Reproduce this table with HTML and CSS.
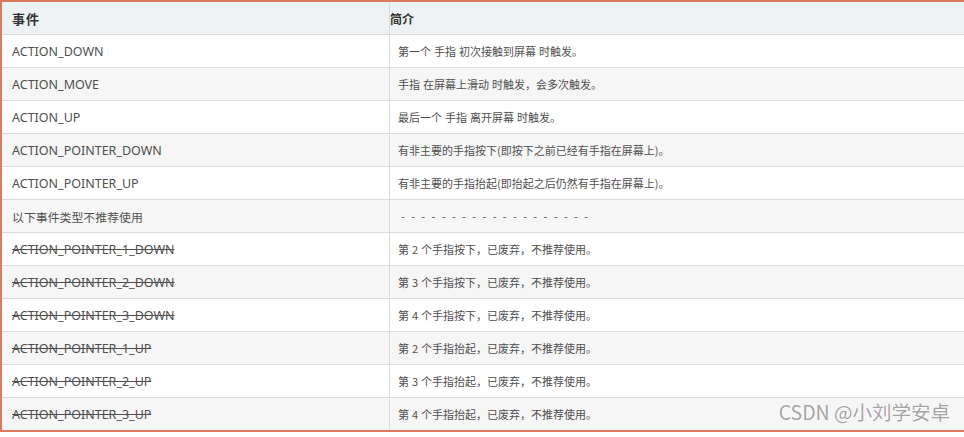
FILE: index.html
```html
<!DOCTYPE html>
<html>
<head>
<meta charset="utf-8">
<link rel="stylesheet" href="styles.css">
</head>
<body>
<div class="frame">
  <div class="table">
    <div class="row head">
      <div class="cell c1">事件</div>
      <div class="cell c2">简介</div>
    </div>
    <div class="row">
      <div class="cell c1">ACTION_DOWN</div>
      <div class="cell c2">第一个 手指 初次接触到屏幕 时触发。</div>
    </div>
    <div class="row alt">
      <div class="cell c1">ACTION_MOVE</div>
      <div class="cell c2">手指 在屏幕上滑动 时触发，会多次触发。</div>
    </div>
    <div class="row">
      <div class="cell c1">ACTION_UP</div>
      <div class="cell c2">最后一个 手指 离开屏幕 时触发。</div>
    </div>
    <div class="row alt">
      <div class="cell c1">ACTION_POINTER_DOWN</div>
      <div class="cell c2">有非主要的手指按下(即按下之前已经有手指在屏幕上)。</div>
    </div>
    <div class="row">
      <div class="cell c1">ACTION_POINTER_UP</div>
      <div class="cell c2">有非主要的手指抬起(即抬起之后仍然有手指在屏幕上)。</div>
    </div>
    <div class="row alt">
      <div class="cell c1 cjk">以下事件类型不推荐使用</div>
      <div class="cell c2 dashes">- - - - - - - - - - - - - - - - - - -</div>
    </div>
    <div class="row">
      <div class="cell c1 del">ACTION_POINTER_1_DOWN</div>
      <div class="cell c2">第 2 个手指按下，已废弃，不推荐使用。</div>
    </div>
    <div class="row alt">
      <div class="cell c1 del">ACTION_POINTER_2_DOWN</div>
      <div class="cell c2">第 3 个手指按下，已废弃，不推荐使用。</div>
    </div>
    <div class="row">
      <div class="cell c1 del">ACTION_POINTER_3_DOWN</div>
      <div class="cell c2">第 4 个手指按下，已废弃，不推荐使用。</div>
    </div>
    <div class="row alt">
      <div class="cell c1 del">ACTION_POINTER_1_UP</div>
      <div class="cell c2">第 2 个手指抬起，已废弃，不推荐使用。</div>
    </div>
    <div class="row">
      <div class="cell c1 del">ACTION_POINTER_2_UP</div>
      <div class="cell c2">第 3 个手指抬起，已废弃，不推荐使用。</div>
    </div>
    <div class="row alt last">
      <div class="cell c1 del">ACTION_POINTER_3_UP</div>
      <div class="cell c2">第 4 个手指抬起，已废弃，不推荐使用。</div>
    </div>
  </div>
  <div class="watermark">CSDN @小刘学安卓</div>
</div>
</body>
</html>
```

FILE: styles.css
```css
html, body {
  margin: 0;
  padding: 0;
  background: #ffffff;
  overflow: hidden;
}

body {
  width: 964px;
  height: 437px;
}

.frame {
  position: relative;
  width: 1000px;
  border-top: 2px solid #dc7b5c;
  border-left: 2px solid #dc7b5c;
  border-bottom: 2px solid #dc7b5c;
  font-family: "Noto Sans", "Noto Sans CJK SC", sans-serif;
  color: #4f4f4f;
}

.table {
  display: flex;
  flex-direction: column;
}

.row {
  display: grid;
  grid-template-columns: 388px 1fr;
  height: 33px;
  box-sizing: border-box;
  border-bottom: 1px solid #dcdcdc;
  background: #ffffff;
}

.row.alt {
  background: #f6f6f6;
}

.row.last {
  border-bottom: none;
  height: 32px;
}

.row.head {
  background: #eff2f5;
  font-weight: bold;
  color: #333333;
}

.cell {
  display: flex;
  align-items: center;
  box-sizing: border-box;
  white-space: nowrap;
}

.c1 {
  border-right: 1px solid #dcdcdc;
  padding-left: 10px;
  font-size: 12.5px;
}

.c2 {
  padding-left: 8px;
  font-family: "Noto Sans CJK SC", sans-serif;
  font-size: 11px;
  word-spacing: 0.5px;
}

.head .c1 {
  font-size: 13px;
  font-family: "Noto Sans CJK SC", sans-serif;
  letter-spacing: 1px;
}

.head .c2 {
  padding-left: 0;
  font-size: 12px;
  word-spacing: 0;
}

.cjk {
  font-family: "Noto Sans CJK SC", sans-serif;
  font-size: 11.9px;
}

.del {
  text-decoration: line-through;
}

.c2.dashes {
  padding-left: 11px;
  word-spacing: 3.9px;
}

.watermark {
  position: absolute;
  right: 52px;
  bottom: 4px;
  font-family: "Noto Sans CJK SC", sans-serif;
  font-size: 19.5px;
  color: rgba(125, 125, 125, 0.7);
  text-shadow: 0 0 2px #ffffff;
}
```
